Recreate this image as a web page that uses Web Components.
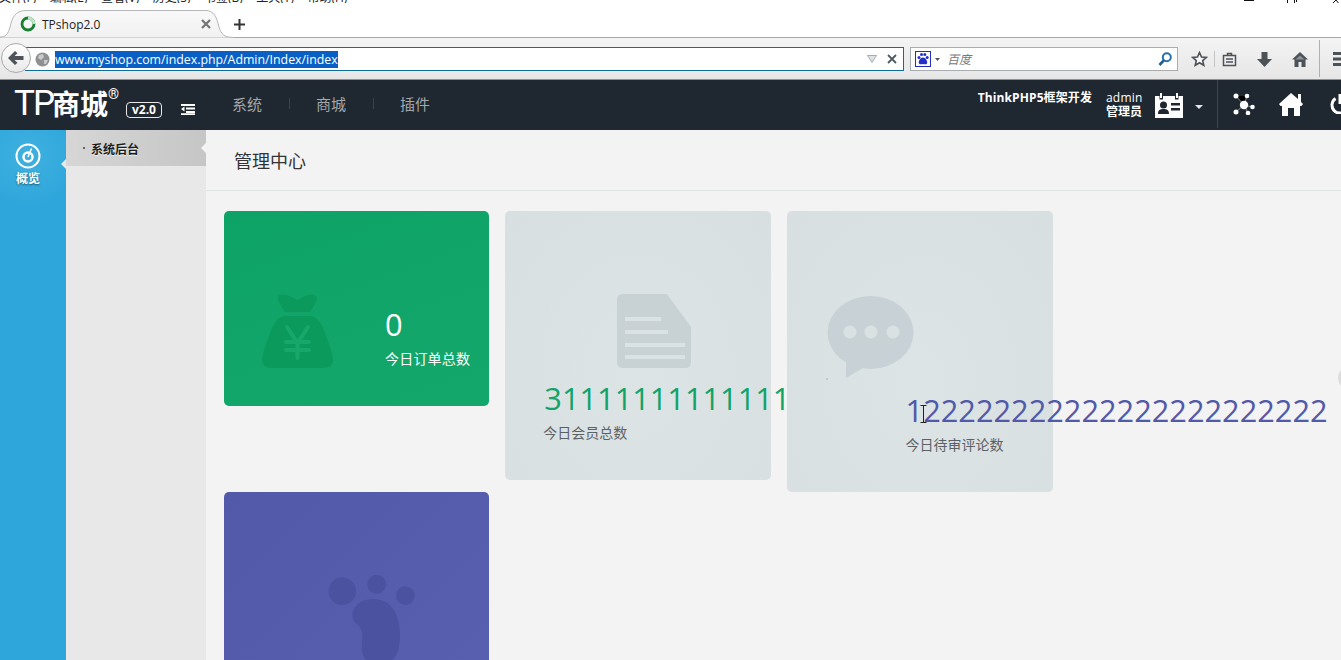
<!DOCTYPE html>
<html lang="zh">
<head>
<meta charset="utf-8">
<title>TPshop2.0</title>
<style>
    html, body { margin: 0; height: 100%; overflow: hidden; background: #f3f3f3; }
    body { font-family: "Open Sans", "Noto Sans CJK SC", sans-serif; }
</style>
</head>
<body>
<app-shell>
    <browser-chrome slot="chrome"></browser-chrome>
    <admin-header slot="header"></admin-header>
    <side-nav slot="side"></side-nav>
    <sub-nav slot="sub"></sub-nav>
    <page-title slot="title">管理中心</page-title>

    <stat-card layout="row" tone="green">
        <svg slot="icon" width="71" height="74" viewBox="0 0 71 74">
            <path fill="#0b9a5c" d="M18 1Q26 0 35.500 6 45 0 52 1 57 2 54 8 51 14 48 18H23Q20 14 17 8 14 2 18 1ZM24 22H47Q58 22 64 42 71 60 71 66 71 74 60 74H11Q0 74 0 66 0 60 7 42 13 22 24 22Z"/>
            <path fill="none" stroke="#18a76b" stroke-width="4" stroke-linecap="round" d="M25 33 35.500 49 46 33M35.500 49V64M24 48H47M24 56H47"/>
        </svg>
        <span slot="number">0</span>
        今日订单总数
    </stat-card>

    <stat-card layout="doc" tone="grey">
        <svg slot="icon" width="74" height="74" viewBox="0 0 74 74">
            <path fill="#c8d2d5" d="M6 0H50L74 33V68Q74 74 68 74H6Q0 74 0 68V6Q0 0 6 0Z"/>
            <path fill="#dae2e3" d="M8 23H44V27H8ZM8 36H51V40H8ZM8 49H68V53H8ZM8 61H68V65H8Z"/>
        </svg>
        <span slot="number">31111111111111</span>
        今日会员总数
    </stat-card>

    <stat-card layout="chat" tone="grey" accent="purple">
        <svg slot="icon" width="88" height="82" viewBox="0 0 88 82">
            <ellipse cx="43.500" cy="36.500" rx="43" ry="36.500" fill="#c8d2d6"/>
            <path fill="#c8d2d6" d="M19 60V82L38 71Z"/>
            <circle cx="23" cy="36" r="6.500" fill="#d9e1e3"/>
            <circle cx="44" cy="36" r="6.500" fill="#d9e1e3"/>
            <circle cx="66" cy="36" r="6.500" fill="#d9e1e3"/>
        </svg>
        <span slot="number">122222222222222222222222</span>
        今日待审评论数
    </stat-card>

    <stat-card layout="paw" tone="purple">
        <svg slot="icon" width="88" height="90" viewBox="0 0 88 90">
            <g fill="#4b52a0">
                <circle cx="14.300" cy="16.300" r="13.700"/>
                <circle cx="48.700" cy="9.300" r="9.400"/>
                <circle cx="77.300" cy="20.700" r="9.400"/>
                <path d="M46 24C62 24 72 38 72 60 72 78 66 90 50 90 38 90 32 80 34 68 35 58 34 54 30 50 24 46 22 38 28 31 32 26 38 24 46 24Z"/>
            </g>
        </svg>
    </stat-card>
</app-shell>

<script>
// page frame: browser bar on top, header, then the three columns
class AppShell extends HTMLElement {
    connectedCallback() {
        this.attachShadow({ mode: 'open' });
        this.shadowRoot.innerHTML = `
            <style>
                :host {
                    display: flex;
                    flex-direction: column;
                    position: relative;
                    width: 1341px;
                    height: 660px;
                    overflow: hidden;
                }
                .main { display: flex; flex: 1; min-height: 0; }
                .content { flex: 1; min-width: 0; }
                .cards {
                    display: grid;
                    grid-template-columns: repeat(3, 266px);
                    grid-template-rows: 281px auto;
                    column-gap: 15.300px;
                    align-items: start;
                    padding: 20px 0 0 18px;
                }
                .edge {
                    position: absolute;
                    left: 1338px;
                    top: 365px;
                    width: 26px;
                    height: 26px;
                    border-radius: 50%;
                    background: #dcdcdc;
                }
                .cursor { position: absolute; left: 920px; top: 405px; }
                .speck { position: absolute; left: 826px; top: 378px; width: 2px; height: 2px; background: #bfc9cc; }
            </style>
            <slot name="chrome"></slot>
            <slot name="header"></slot>
            <div class="main">
                <slot name="side"></slot>
                <slot name="sub"></slot>
                <div class="content">
                    <slot name="title"></slot>
                    <div class="cards"><slot></slot></div>
                </div>
            </div>
            <div class="edge"></div>
            <div class="speck"></div>
            <svg class="cursor" width="7" height="18" viewBox="0 0 7 18">
                <path fill="none" stroke="#222" d="M.5.500H6.500M3.500.500V17.500M.5 17.500H6.500"/>
            </svg>
        `;
    }
}

class BrowserChrome extends HTMLElement {
    connectedCallback() {
        this.attachShadow({ mode: 'open' });
        const menus = ['文件(F)', '编辑(E)', '查看(V)', '历史(S)', '书签(B)', '工具(T)', '帮助(H)'];
        this.shadowRoot.innerHTML = `
            <style>
                :host {
                    display: block;
                    height: 80px;
                    background: #fff;
                    font-family: "Open Sans", "Noto Sans CJK SC", sans-serif;
                    color: #222;
                }
                .menu {
                    display: flex;
                    align-items: flex-end;
                    height: 3px;
                    overflow: hidden;
                    position: relative;
                    font-size: 12px;
                    line-height: 12px;
                    gap: 13.500px;
                    margin-left: -1px;
                }
                .menu span { flex: none; margin-bottom: -1px; }
                .win { position: absolute; top: 0; }
                .tabs {
                    display: flex;
                    align-items: flex-end;
                    height: 35px;
                    box-shadow: inset 0 -1px 0 #a4a8ac;
                }
                .tab {
                    display: flex;
                    align-items: center;
                    box-sizing: border-box;
                    width: 220px;
                    height: 28px;
                    margin-left: 6px;
                    padding: 0 15px 0 14px;
                    font-size: 12px;
                    gap: 6px;
                    position: relative;
                }
                .tab > * { position: relative; }
                .tab .shape { position: absolute; left: -6px; top: 0; }
                .tab .title { flex: 1; }
                .plus { margin: 0 0 8px 8px; display: block; }
                .nav {
                    display: flex;
                    align-items: center;
                    height: 40px;
                    padding-top: 1px;
                    border-bottom: 1px solid #8e9091;
                    background: linear-gradient(#f4f4f4, #e6e6e6);
                    position: relative;
                }
                .back {
                    position: absolute;
                    left: 1px;
                    top: 5px;
                    width: 30px;
                    height: 30px;
                    box-sizing: border-box;
                    border: 1px solid #a9a9a9;
                    border-radius: 50%;
                    background: linear-gradient(#fff, #e9e9e9);
                    display: flex;
                    align-items: center;
                    justify-content: center;
                }
                .url {
                    display: flex;
                    align-items: center;
                    box-sizing: border-box;
                    width: 879px;
                    height: 24px;
                    margin-left: 25px;
                    padding: 0 6px 0 10px;
                    border: 1px solid #0f6d97;
                    border-left: 0;
                    background: #fff;
                    gap: 5px;
                }
                .url .addr {
                    flex: none;
                    background: #0a5fc4;
                    color: #fff;
                    font-size: 12.350px;
                    line-height: 17px;
                    width: 283px;
                    white-space: nowrap;
                }
                .url .fill { flex: 1; }
                .search {
                    display: flex;
                    align-items: center;
                    box-sizing: border-box;
                    width: 268px;
                    height: 24px;
                    margin-left: 6px;
                    padding: 0 4px 0 4px;
                    border: 1px solid #a9adb0;
                    background: #fff;
                    gap: 4px;
                }
                .search i {
                    flex: 1;
                    font-size: 12px;
                    color: #7a7a7a;
                    padding-left: 3px;
                }
                .tools { display: flex; align-items: center; flex: 1; position: relative; height: 100%; }
                .tools svg { position: absolute; }
                .sep { position: absolute; width: 1px; background: #c4c4c4; }
            </style>
            <div class="menu">
                ${menus.map(m => `<span>${m}</span>`).join('')}
                <svg class="win" style="left:1245px" width="10" height="3"><path d="M0 .5H10" stroke="#111"/></svg>
                <svg class="win" style="left:1287px" width="12" height="5"><path fill="none" d="M1.500 0V3.500H8.500V0M10.500 0V2" stroke="#111"/></svg>
                <svg class="win" style="left:1332px" width="9" height="5"><path fill="none" d="M0 5 5 0 9 5" stroke="#111"/></svg>
            </div>
            <div class="tabs">
                <div class="tab">
                    <svg class="shape" width="234" height="28" viewBox="0 0 234 28">
                        <defs><linearGradient id="tabfill" x1="0" y1="0" x2="0" y2="1"><stop offset="0" stop-color="#f9f9f9"/><stop offset="1" stop-color="#f1f1f1"/></linearGradient></defs>
                        <path fill="url(#tabfill)" stroke="#b4b6b8" d="M0 27C6 27 8 24 10 17 12 8 15 .5 26 .5H206C214 .5 217 8 219 17 221 24 224 27.500 234 27.500V28H0Z"/>
                    </svg>
                    <svg width="16" height="16" viewBox="0 0 16 16">
                        <circle cx="8" cy="8" r="6" fill="none" stroke="#177f30" stroke-width="2.800"/>
                        <path d="M8 2A6 6 0 0 1 14 8" fill="none" stroke="#bfe6c8" stroke-width="2.800"/>
                    </svg>
                    <span class="title">TPshop2.0</span>
                    <svg width="10" height="10" viewBox="0 0 10 10"><path d="M1 1 9 9M9 1 1 9" stroke="#737373" stroke-width="2.200"/></svg>
                </div>
                <svg class="plus" width="11" height="11" viewBox="0 0 11 11"><path d="M5.500 0V11M0 5.500H11" stroke="#333" stroke-width="2"/></svg>
            </div>
            <div class="nav">
                <div class="url">
                    <svg width="15" height="15" viewBox="0 0 15 15">
                        <circle cx="7.500" cy="7.500" r="7" fill="#8e9091"/>
                        <path d="M4 3 8 2 9 5 6 8 3 6ZM9 8 13 8 11 12 9 12Z" fill="#c9cacb"/>
                    </svg>
                    <span class="addr">www.myshop.com/index.php/Admin/Index/index</span>
                    <span class="fill"></span>
                    <svg width="10" height="8" viewBox="0 0 10 8" style="margin-right:5px"><path d="M.5.500H9.500L5 7.500Z" fill="#dfe3e5" stroke="#a5abb0"/></svg>
                    <svg width="10" height="10" viewBox="0 0 10 10"><path d="M1 1 9 9M9 1 1 9" stroke="#4e5a62" stroke-width="1.800"/></svg>
                </div>
                <div class="search">
                    <svg width="16" height="16" viewBox="0 0 16 16">
                        <rect width="16" height="16" fill="#fff" stroke="#2230b8" stroke-width="2"/>
                        <g fill="#2230c8">
                            <circle cx="4" cy="6.500" r="1.500"/><circle cx="6.500" cy="3.500" r="1.500"/><circle cx="9.800" cy="3.500" r="1.500"/><circle cx="12.200" cy="6.500" r="1.500"/>
                            <path d="M8 6.500C11 6.500 13 11 12 12.500 11 14 9 13 8 13 7 13 5 14 4 12.500 3 11 5 6.500 8 6.500Z"/>
                        </g>
                    </svg>
                    <svg width="5" height="3" viewBox="0 0 5 3"><path d="M0 0H5L2.500 3Z" fill="#555"/></svg>
                    <i>百度</i>
                    <svg width="14" height="15" viewBox="0 0 14 15" style="margin-right:1px">
                        <circle cx="8.800" cy="5.300" r="4" fill="none" stroke="#2a6fa8" stroke-width="2"/>
                        <path d="M5.800 8.300 1.500 13" stroke="#1d5d92" stroke-width="2.600"/>
                    </svg>
                </div>
                <div class="tools">
                    <svg style="left:13px" width="17" height="16" viewBox="0 0 17 16"><path d="M8.500 1.500 10.500 6 15.300 6.400 11.700 9.600 12.800 14.300 8.500 11.800 4.200 14.300 5.300 9.600 1.700 6.400 6.500 6Z" fill="#fafafa" stroke="#4b5258" stroke-width="1.600"/></svg>
                    <span class="sep" style="left:36px;top:12px;height:16px"></span>
                    <svg style="left:44px" width="15" height="15" viewBox="0 0 15 15"><path d="M1.500 3.500H13.500V13.500H1.500ZM5.500 3.500V1.500H9.500V3.500M4 7H11M4 10H11" fill="none" stroke="#4b5258" stroke-width="1.500"/></svg>
                    <svg style="left:79px" width="15" height="15" viewBox="0 0 15 15"><path d="M4.500 0H10.500V7H15L7.500 15 0 7H4.500Z" fill="#4b5258"/></svg>
                    <svg style="left:114px" width="16" height="15" viewBox="0 0 16 15"><path d="M8 0 16 7.500H13.500V15H9.500V10H6.500V15H2.500V7.500H0Z" fill="#4b5258"/><path d="M8 3.500 3.500 7.500H12.500Z" fill="#8b9095"/></svg>
                    <span class="sep" style="left:141px;top:1px;height:37px;background:#aeb0b2"></span>
                    <svg style="left:155px" width="12" height="14" viewBox="0 0 12 14"><path d="M0 0H12V3H0ZM0 5.500H12V8.500H0ZM0 11H12V14H0Z" fill="#4b5258"/></svg>
                </div>
                <div class="back">
                    <svg width="16" height="14" viewBox="0 0 16 14"><path d="M7 0 9.500 2.200 6.500 5H15.500V9H6.500L9.500 11.800 7 14 0 7Z" fill="#4d5358"/></svg>
                </div>
            </div>
        `;
    }
}

class AdminHeader extends HTMLElement {
    connectedCallback() {
        this.attachShadow({ mode: 'open' });
        this.shadowRoot.innerHTML = `
            <style>
                :host {
                    display: flex;
                    align-items: center;
                    flex: none;
                    height: 50px;
                    background: #1f2730;
                    color: #fff;
                    font-family: "Open Sans", "Noto Sans CJK SC", sans-serif;
                    position: relative;
                    overflow: hidden;
                }
                .logo {
                    display: flex;
                    align-items: baseline;
                    margin-left: 14px;
                    font-family: Roboto, "Noto Sans CJK SC", sans-serif;
                    line-height: 50px;
                    width: 112px;
                    position: relative;
                }
                .logo b { font-weight: 400; font-size: 35px; letter-spacing: -2px; width: 38px; }
                .logo span { font-weight: 700; font-size: 28px; letter-spacing: 0; }
                .logo sup { position: absolute; left: 94px; top: -10px; font-size: 14px; line-height: 50px; }
                .ver {
                    box-sizing: border-box;
                    width: 36px;
                    height: 16px;
                    margin-top: 10px;
                    border: 1px solid #e8e8e8;
                    border-radius: 4px;
                    font-size: 12px;
                    font-weight: 700;
                    line-height: 14px;
                    text-align: center;
                }
                .toggle { margin: 9px 0 0 19px; display: block; }
                nav {
                    display: flex;
                    margin: 0 0 4px 37px;
                    color: #a3a8ab;
                    font-size: 15px;
                    flex: 1;
                }
                nav span { width: 84px; flex: none; position: relative; }
                nav span + span::before {
                    content: "";
                    position: absolute;
                    left: -27px;
                    top: 5px;
                    height: 11px;
                    width: 1px;
                    background: #3a434c;
                }
                .brand { font-size: 12px; font-weight: 700; letter-spacing: .1px; margin: -17px 14px 0 0; }
                .user { font-size: 12px; line-height: 14px; width: 36px; margin-right: 13px; text-align: right; letter-spacing: .2px; }
                .user b { display: block; font-weight: 700; letter-spacing: 0; }
                .caret { margin: 3px 14px 0 12px; display: block; }
                .actions {
                    display: flex;
                    align-items: center;
                    align-self: stretch;
                    width: 123px;
                    flex: none;
                    margin-bottom: 2px;
                    border-left: 1px solid #3c444c;
                    position: relative;
                }
                .actions svg { position: absolute; }
            </style>
            <div class="logo"><b>TP</b><span>商城</span><sup>®</sup></div>
            <div class="ver">v2.0</div>
            <svg class="toggle" width="14" height="11" viewBox="0 0 14 11">
                <path fill="#fff" d="M0 0H14V2H0ZM5 3.500H14V5.500H5ZM5 7H14V9H5ZM0 9.200H14V11H0ZM0 5 3.500 2.500V7.500Z"/>
            </svg>
            <nav><span>系统</span><span>商城</span><span>插件</span></nav>
            <div class="brand">ThinkPHP5框架开发</div>
            <div class="user">admin<b>管理员</b></div>
            <svg width="28" height="25" viewBox="0 0 28 25">
                <path fill="#fff" d="M1 3H4.500V6.500H8V3H20V6.500H23.500V3H28V25H0V3Z"/>
                <path fill="#fff" d="M5 0H7V5H5ZM21 0H23V5H21Z"/>
                <circle cx="8.500" cy="12" r="3.500" fill="#1f2730"/>
                <path fill="#1f2730" d="M3 21C3 17 5 16 8.500 16S14 17 14 21ZM16 10H25V12.500H16ZM16 15H25V17.500H16Z"/>
            </svg>
            <svg class="caret" width="8" height="4" viewBox="0 0 8 4"><path d="M0 0H8L4 4Z" fill="#e4e4e4"/></svg>
            <div class="actions">
                <svg style="left:15px;top:13px" width="23" height="22" viewBox="0 0 23 22">
                    <path d="M3 3 11 12 14 3M11 12 19 14M11 12 3 19M11 12 15 20" stroke="#fff" stroke-width=".5"/>
                    <g fill="#fff">
                        <circle cx="11" cy="12" r="4.200"/>
                        <circle cx="3" cy="3" r="2.500"/><circle cx="14" cy="3" r="2.300"/>
                        <circle cx="19.500" cy="14" r="2.300"/><circle cx="3" cy="19" r="2.500"/>
                        <circle cx="15" cy="20" r="2.300"/>
                    </g>
                </svg>
                <svg style="left:61px;top:12px" width="24" height="24" viewBox="0 0 24 24">
                    <path fill="#fff" d="M12 1 19 7V2H22V10L24 12 22.500 14H21V24H15V16H9V24H3V14H1.500L0 12Z"/>
                </svg>
                <svg style="left:112px;top:14px" width="20" height="20" viewBox="0 0 20 20">
                    <path fill="none" stroke="#fff" stroke-width="3" d="M5.500 4.500A8 8 0 1 0 14.500 4.500M10 0V10"/>
                </svg>
            </div>
        `;
    }
}

class SideNav extends HTMLElement {
    connectedCallback() {
        this.attachShadow({ mode: 'open' });
        this.shadowRoot.innerHTML = `
            <style>
                :host {
                    display: flex;
                    flex-direction: column;
                    align-items: center;
                    box-sizing: border-box;
                    width: 66px;
                    height: 530px;
                    padding: 13px 10px 0 0;
                    background: radial-gradient(circle at 28px 26px, #3fb1e0, #2fa6db 50px);
                    color: #fff;
                    font-family: "Noto Sans CJK SC", sans-serif;
                    position: relative;
                }
                :host::after {
                    content: "";
                    position: absolute;
                    right: 0;
                    top: 29px;
                    border: 5px solid transparent;
                    border-left: 0;
                    border-right-color: #e8e8e8;
                }
                .item {
                    font-size: 12px;
                    font-weight: 700;
                    line-height: 16px;
                    margin-top: 1px;
                    text-shadow: 0 1px 2px rgba(0,0,0,.5);
                }
            </style>
            <svg width="26" height="26" viewBox="0 0 26 26">
                <circle cx="13" cy="13" r="11.500" fill="none" stroke="#fff" stroke-width="2"/>
                <circle cx="13" cy="14" r="4.500" fill="none" stroke="#fff" stroke-width="2.500"/>
                <path d="M13 14 16.500 5.500" stroke="#fff" stroke-width="1.500"/>
            </svg>
            <div class="item">概览</div>
        `;
    }
}

class SubNav extends HTMLElement {
    connectedCallback() {
        this.attachShadow({ mode: 'open' });
        this.shadowRoot.innerHTML = `
            <style>
                :host {
                    display: block;
                    flex: none;
                    width: 140px;
                    height: 530px;
                    background: #e8e8e8;
                    font-family: "Noto Sans CJK SC", sans-serif;
                }
                .active {
                    display: flex;
                    align-items: center;
                    height: 36px;
                    padding-left: 17px;
                    gap: 6px;
                    position: relative;
                    background: linear-gradient(90deg, #d6d6d6, #c6c6c6);
                    font-size: 12px;
                    font-weight: 700;
                    color: #1c1c1c;
                    text-shadow: 0 1px 0 #eee;
                }
                .active::before {
                    content: "";
                    width: 2px;
                    height: 2px;
                    background: #666;
                }
                .active::after {
                    content: "";
                    position: absolute;
                    right: 0;
                    top: 13px;
                    border: 5px solid transparent;
                    border-left: 0;
                    border-right-color: #f5f5f5;
                }
            </style>
            <div class="active">系统后台</div>
        `;
    }
}

class PageTitle extends HTMLElement {
    connectedCallback() {
        this.attachShadow({ mode: 'open' });
        this.shadowRoot.innerHTML = `
            <style>
                :host {
                    display: flex;
                    align-items: center;
                    box-sizing: border-box;
                    height: 61px;
                    padding: 0 0 0 28px;
                    border-bottom: 1px solid #e0e4e4;
                    font-family: "Noto Sans CJK SC", sans-serif;
                    font-size: 18px;
                    color: #333;
                }
            </style>
            <slot></slot>
        `;
    }
}

class StatCard extends HTMLElement {
    connectedCallback() {
        this.attachShadow({ mode: 'open' });
        this.shadowRoot.innerHTML = `
            <style>
                :host {
                    display: block;
                    box-sizing: border-box;
                    border-radius: 5px;
                    font-family: "Open Sans", "Noto Sans CJK SC", sans-serif;
                    white-space: nowrap;
                    --num: #12a36a;
                    --lbl: #5c6166;
                }
                :host([tone=green]) {
                    background: linear-gradient(160deg, #0ea366, #14a76c);
                    --num: #fff;
                    --lbl: #fff;
                }
                :host([tone=grey]) { background: radial-gradient(ellipse at 50% 60%, #dce4e5, #d8dfe1); }
                :host([tone=purple]) { background: linear-gradient(135deg, #5159a8, #5a61b0); }
                :host([accent=purple]) { --num: #5159a8; }

                :host([layout=row]) { display: flex; width: 265px; height: 195px; padding: 83px 0 0 38px; }
                :host([layout=row]) .body { margin: 10px 0 0 52px; }
                :host([layout=row]) .lbl { letter-spacing: .2px; }

                :host([layout=doc]) { height: 269px; padding: 83px 0 0 39px; }
                :host([layout=doc]) .icon { margin-left: 73px; }
                :host([layout=doc]) .body { margin-top: 10px; }
                :host([layout=doc]) .lbl { margin-left: -1px; }

                :host([layout=chat]) { height: 281px; padding: 85px 0 0 40px; }
                :host([layout=chat]) .body { margin: 12px 0 0 79px; }

                :host([layout=paw]) { width: 265px; height: 300px; padding: 83px 0 0 104px; }

                .icon { display: block; line-height: 0; flex: none; }
                .num { font-size: 30.750px; line-height: 40px; color: var(--num); }
                .lbl { font-size: 14px; line-height: 20px; margin-top: 5px; color: var(--lbl); }
            </style>
            <div class="icon"><slot name="icon"></slot></div>
            <div class="body" part="body">
                <div class="num"><slot name="number"></slot></div>
                <div class="lbl"><slot></slot></div>
            </div>
        `;
    }
}

customElements.define('app-shell', AppShell);
customElements.define('browser-chrome', BrowserChrome);
customElements.define('admin-header', AdminHeader);
customElements.define('side-nav', SideNav);
customElements.define('sub-nav', SubNav);
customElements.define('page-title', PageTitle);
customElements.define('stat-card', StatCard);
</script>
</body>
</html>
